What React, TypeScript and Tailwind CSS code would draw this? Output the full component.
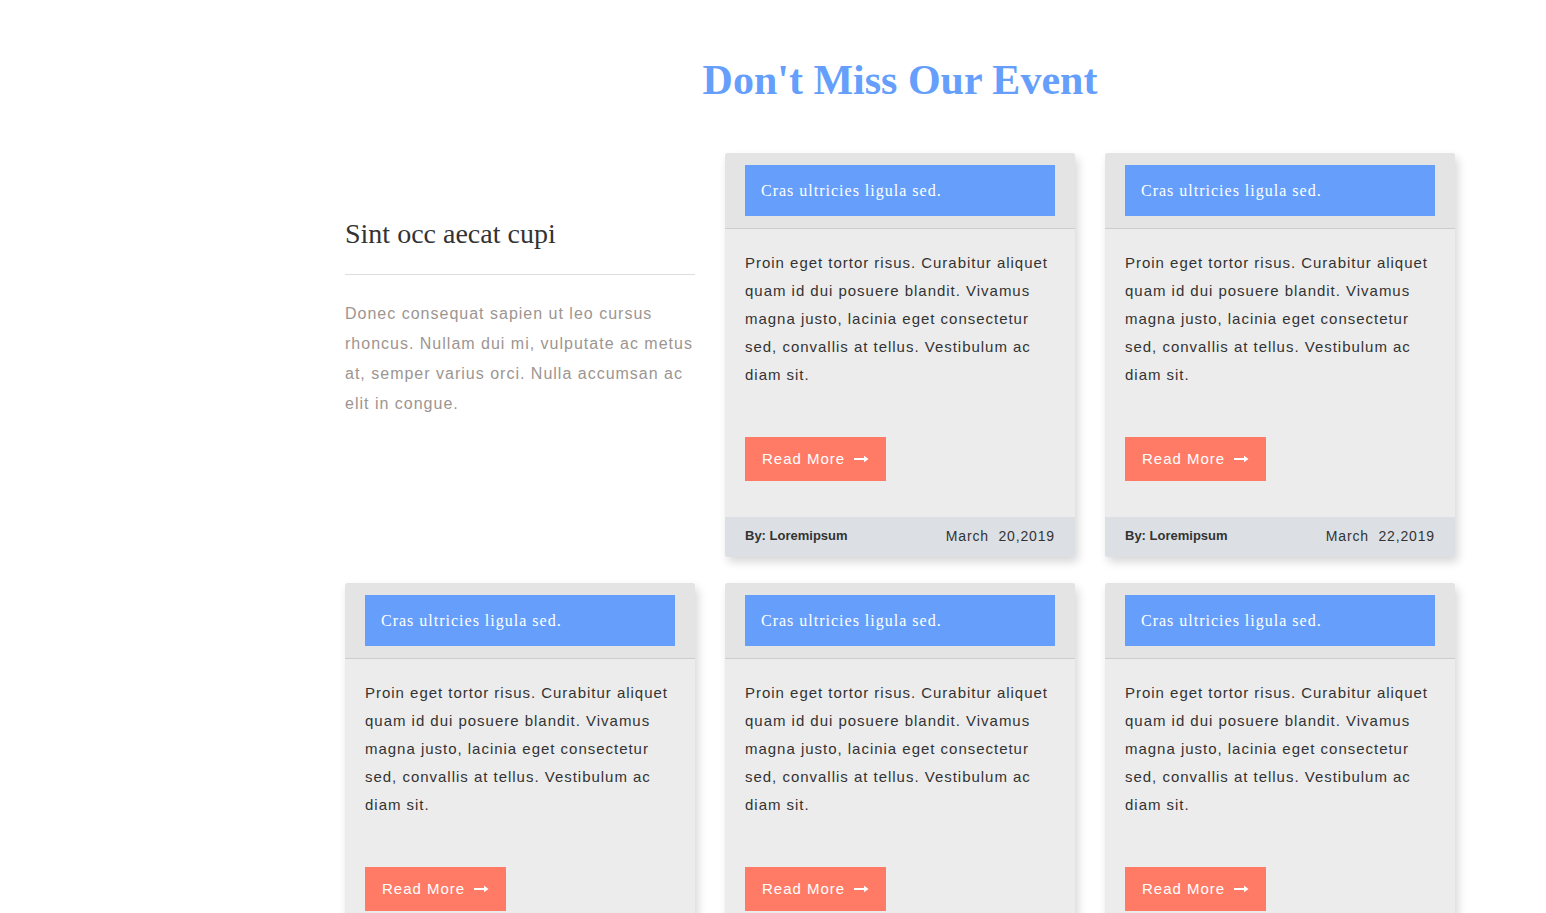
import React from "react";

type EventCard = {
  title: string;
  body: string;
  author: string;
  date: string;
};

const body =
  "Proin eget tortor risus. Curabitur aliquet quam id dui posuere blandit. Vivamus magna justo, lacinia eget consectetur sed, convallis at tellus. Vestibulum ac diam sit.";

const events: EventCard[] = [
  { title: "Cras ultricies ligula sed.", body, author: "Loremipsum", date: "March\u00a0 20,2019" },
  { title: "Cras ultricies ligula sed.", body, author: "Loremipsum", date: "March\u00a0 22,2019" },
  { title: "Cras ultricies ligula sed.", body, author: "Loremipsum", date: "March\u00a0 20,2019" },
  { title: "Cras ultricies ligula sed.", body, author: "Loremipsum", date: "March\u00a0 20,2019" },
  { title: "Cras ultricies ligula sed.", body, author: "Loremipsum", date: "March\u00a0 22,2019" },
];

function Arrow() {
  return (
    <svg width="15" height="8" viewBox="0 0 15 8" fill="none" aria-hidden="true">
      <path d="M0 4h13" stroke="currentColor" strokeWidth="2" />
      <path d="M10 0.8 14.5 4 10 7.2Z" fill="currentColor" />
    </svg>
  );
}

function Card({ item }: { item: EventCard }) {
  return (
    <div className="overflow-hidden rounded-[3px] bg-[#ececec] shadow-[3px_5px_10px_rgba(0,0,0,0.16)]">
      <div className="border-b border-[#cdcdcd] bg-[#e4e4e4] px-5 pb-3 pt-3">
        <div className="flex h-[51px] items-center bg-[#669ffb] px-4 font-['Liberation_Serif',serif] text-[16px] tracking-[1px] text-white">
          {item.title}
        </div>
      </div>
      <div className="px-5 pb-9 pt-[20px]">
        <p className="font-['Liberation_Sans',sans-serif] text-[15px] leading-[28px] tracking-[0.98px] text-[#333]">
          {item.body}
        </p>
        <button className="mt-[48px] flex h-[44px] items-center gap-[9px] bg-[#ff7b66] px-[17px] font-['Liberation_Sans',sans-serif] text-[15px] tracking-[1px] text-white">
          Read More
          <Arrow />
        </button>
      </div>
      <div className="flex h-[40px] items-center justify-between bg-[#dce0e4] px-5 pb-[2px] font-['Liberation_Sans',sans-serif] text-[#333]">
        <span className="text-[13px] font-bold">By: {item.author}</span>
        <span className="text-[14px] tracking-[0.85px]">{item.date}</span>
      </div>
    </div>
  );
}

export default function App() {
  return (
    <div className="min-h-screen bg-white">
      <section className="ml-[345px] w-[1110px] pt-[55px]">
        <h2 className="text-center font-['Liberation_Serif',serif] text-[42px] font-bold leading-[50px] text-[#669ffb]">
          Don't Miss Our Event
        </h2>
        <div className="mt-[48px] grid grid-cols-3 gap-x-[30px] gap-y-[26px]">
          <div className="pt-[62px]">
            <h3 className="font-['Liberation_Serif',serif] text-[28px] leading-[38px] text-[#333]">
              Sint occ aecat cupi
            </h3>
            <div className="mt-[21px] h-px bg-[#dedede]" />
            <p className="mt-[24px] font-['Liberation_Sans',sans-serif] text-[16px] leading-[30px] tracking-[1px] text-[#9c9591]">
              Donec consequat sapien ut leo cursus rhoncus. Nullam dui mi, vulputate ac metus at, semper varius orci. Nulla accumsan ac elit in congue.
            </p>
          </div>
          {events.map((item, i) => (
            <Card key={i} item={item} />
          ))}
        </div>
      </section>
    </div>
  );
}
